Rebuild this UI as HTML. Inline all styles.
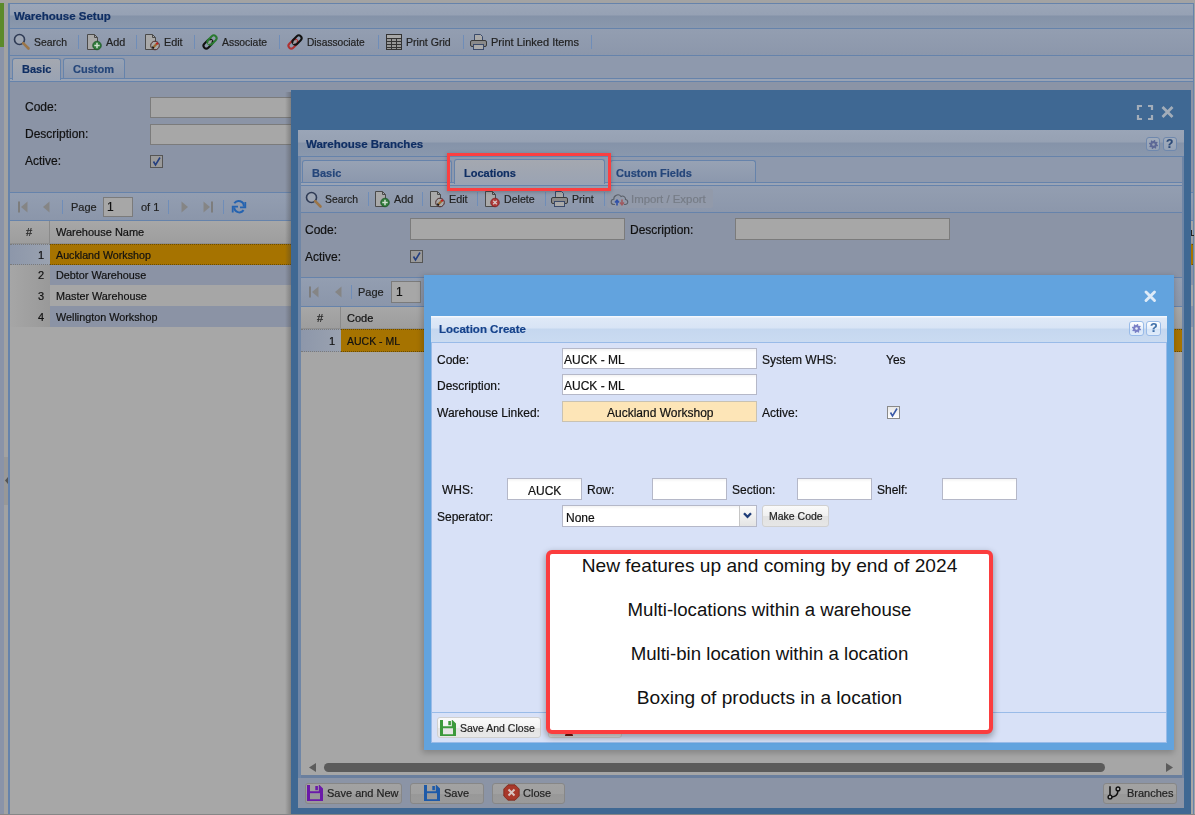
<!DOCTYPE html>
<html><head><meta charset="utf-8">
<style>
*{box-sizing:border-box;margin:0;padding:0}
html,body{width:1195px;height:815px;overflow:hidden;background:#a3a3a3;font-family:"Liberation Sans",sans-serif;font-size:11px;color:#111}
.a{position:absolute}
.t{position:absolute;white-space:nowrap;line-height:13px;will-change:transform;-webkit-text-stroke:0.2px currentColor}
.b{font-weight:bold}
.hd{color:#0f2e63;font-weight:bold}
.inp{position:absolute;background:#a7a7a7;border:1px solid #7b7b7b}
.btn{background:linear-gradient(#a2a2a2 0,#a0a0a0 50%,#989898 51%,#9a9a9a);border:1px solid #878787;border-radius:3px}
.fi{background:linear-gradient(#f3f3f3,#fff 3px);border:1px solid #b5b8c8}
.sep{position:absolute;width:1px;height:14px;background:#6f8db8}
svg{position:absolute;overflow:visible}
</style></head><body>

<!-- ============ LEFT STRIP ============ -->
<div class="a" style="left:0;top:3px;width:4px;height:44px;background:#5b8a2b"></div>
<div class="a" style="left:0;top:47px;width:4px;height:768px;background:#8a93a8"></div>
<div class="a" style="left:4px;top:3px;width:4px;height:812px;background:#a2a2a2"></div>
<div class="a" style="left:4px;top:457px;width:4px;height:48px;background:#989898"></div>
<svg style="left:4px;top:476px" width="4" height="9"><path d="M1 4.5 L4 1 L4 8 Z" fill="#555"/></svg>

<!-- ============ MAIN PANEL (Warehouse Setup) ============ -->
<div class="a" id="mp" style="left:8px;top:3px;width:1186px;height:812px;background:#a7a7a7;border:1px solid #6683ab;border-bottom:none"></div>
<!-- header -->
<div class="a" style="left:9px;top:4px;width:1184px;height:24px;background:linear-gradient(#9ba6b8 0,#96a1b4 11px,#8492a8 12px,#8a98ad 24px)"></div>
<div class="a" style="left:9px;top:28px;width:1184px;height:1px;background:#6683ab"></div>
<div class="t hd" style="left:14px;top:10px;font-size:11.5px">Warehouse Setup</div>
<!-- toolbar -->
<div class="a" style="left:9px;top:29px;width:1184px;height:26px;background:linear-gradient(#939eb1,#8c97ab)"></div>
<div class="a" style="left:9px;top:55px;width:1184px;height:1px;background:#6683ab"></div>
<div class="a" style="left:9px;top:56px;width:1184px;height:1px;background:#8f9aad"></div>

<!-- toolbar items -->
<svg style="left:13px;top:33px" width="17" height="17" viewBox="0 0 17 17"><circle cx="6.5" cy="6.5" r="5" fill="#9da5b3" stroke="#2f3b55" stroke-width="1.6"/><path d="M10.2 10.2 L15.5 15.5" stroke="#9b7548" stroke-width="2.6" stroke-linecap="round"/></svg>
<div class="t" style="left:34px;top:36px;color:#222;font-size:10.4px">Search</div>
<div class="sep" style="left:78px;top:35px"></div>
<svg style="left:86px;top:34px" width="16" height="16" viewBox="0 0 16 16"><path d="M1.5 0.5 H8.5 L11.5 3.5 V15.5 H1.5 Z" fill="#a9a9a9" stroke="#4a4a4a" stroke-width="1"/><path d="M8.5 0.5 V3.5 H11.5" fill="none" stroke="#4a4a4a"/><circle cx="11" cy="11.5" r="4.3" fill="#2f7a3a" stroke="#1d5526" stroke-width=".8"/><path d="M11 8.8 V14.2 M8.3 11.5 H13.7" stroke="#cfe0cf" stroke-width="1.5"/></svg>
<div class="t" style="left:106px;top:36px;color:#222;font-size:10.8px">Add</div>
<div class="sep" style="left:136px;top:35px"></div>
<svg style="left:144px;top:34px" width="16" height="16" viewBox="0 0 16 16"><path d="M1.5 0.5 H8.5 L11.5 3.5 V15.5 H1.5 Z" fill="#a9a9a9" stroke="#4a4a4a" stroke-width="1"/><path d="M8.5 0.5 V3.5 H11.5" fill="none" stroke="#4a4a4a"/><circle cx="11" cy="11.5" r="4.3" fill="#a9a9a9" stroke="#4a2a2a" stroke-width="1"/><path d="M8.6 14.1 L9.8 12.9" stroke="#111" stroke-width="2.2"/><path d="M9.6 13.1 L12.6 10" stroke="#9a6a30" stroke-width="2.2"/><path d="M12.4 10.2 L13.8 8.8" stroke="#c02020" stroke-width="2.2"/></svg>
<div class="t" style="left:164px;top:36px;color:#222;font-size:10.8px">Edit</div>
<div class="sep" style="left:194px;top:35px"></div>
<svg style="left:201px;top:33px" width="18" height="18" viewBox="0 0 18 18"><rect x="1.8" y="8.2" width="10.5" height="5.6" rx="2.8" transform="rotate(-45 7 11)" fill="none" stroke="#111" stroke-width="2"/><rect x="5.8" y="4.2" width="10.5" height="5.6" rx="2.8" transform="rotate(-45 11 7)" fill="none" stroke="#2a7a30" stroke-width="2"/><path d="M7.2 10.8 L10.8 7.2" stroke="#a0a0a0" stroke-width="1.6"/></svg>
<div class="t" style="left:222px;top:36px;color:#222;font-size:10.4px">Associate</div>
<div class="sep" style="left:279px;top:35px"></div>
<svg style="left:286px;top:33px" width="18" height="18" viewBox="0 0 18 18"><rect x="1.8" y="8.2" width="10.5" height="5.6" rx="2.8" transform="rotate(-45 7 11)" fill="none" stroke="#b03030" stroke-width="2"/><rect x="5.8" y="4.2" width="10.5" height="5.6" rx="2.8" transform="rotate(-45 11 7)" fill="none" stroke="#111" stroke-width="2"/><path d="M7.2 10.8 L10.8 7.2" stroke="#a0a0a0" stroke-width="1.6"/></svg>
<div class="t" style="left:307px;top:36px;color:#222;font-size:10.2px">Disassociate</div>
<div class="sep" style="left:378px;top:35px"></div>
<svg style="left:386px;top:34px" width="16" height="16" viewBox="0 0 16 16"><rect x="0.5" y="0.5" width="15" height="15" fill="#979797" stroke="#333"/><path d="M0.5 4.5 H15.5 M0.5 7.5 H15.5 M0.5 10.5 H15.5 M0.5 13.5 H15.5 M5.5 4.5 V15.5 M10.5 4.5 V15.5" stroke="#333" stroke-width="1"/><rect x="1" y="1" width="14" height="3" fill="#a8a8a8"/></svg>
<div class="t" style="left:406px;top:36px;color:#222;font-size:10.6px">Print Grid</div>
<div class="sep" style="left:463px;top:35px"></div>
<svg style="left:470px;top:34px" width="17" height="16" viewBox="0 0 17 16"><path d="M4.5 6.5 V0.5 H10.5 L12.5 2.5 V6.5" fill="#a9a9a9" stroke="#3a4a6a"/><rect x="0.5" y="6.5" width="16" height="6" rx="1.5" fill="#8a8a8a" stroke="#3a3a3a"/><rect x="3.5" y="10.5" width="10" height="5" fill="#a9a9a9" stroke="#3a4a6a"/></svg>
<div class="t" style="left:491px;top:36px;color:#222">Print Linked Items</div>
<div class="sep" style="left:591px;top:35px"></div>

<!-- tab strip -->
<div class="a" style="left:9px;top:57px;width:1184px;height:25px;background:#8e99ad"></div>
<div class="a" style="left:10px;top:78px;width:1183px;height:1px;background:#6683ab"></div>
<div class="a" style="left:10px;top:79px;width:1183px;height:2px;background:#9aa4b5"></div>
<div class="a" style="left:10px;top:81px;width:1183px;height:1px;background:#6683ab"></div>
<div class="a" style="left:9px;top:57px;width:1px;height:25px;background:#6683ab"></div>
<div class="a" style="left:12px;top:58px;width:49px;height:22px;border:1px solid #6683ab;border-bottom:none;border-radius:3px 3px 0 0;background:linear-gradient(#a4a8b0,#9aa3b3)"></div>
<div class="t hd" style="left:22px;top:63px">Basic</div>
<div class="a" style="left:63px;top:58px;width:62px;height:20px;border:1px solid #6683ab;border-bottom:none;border-radius:3px 3px 0 0;background:linear-gradient(#97a2b4,#8c98ad)"></div>
<div class="t hd" style="left:73px;top:63px;color:#25467a">Custom</div>

<!-- form -->
<div class="a" style="left:9px;top:82px;width:1184px;height:110px;background:#8b94a6"></div>
<div class="t" style="left:25px;top:101px;font-size:12px">Code:</div>
<div class="inp" style="left:150px;top:97px;width:160px;height:21px"></div>
<div class="t" style="left:25px;top:128px;font-size:12px">Description:</div>
<div class="inp" style="left:150px;top:124px;width:160px;height:21px"></div>
<div class="t" style="left:25px;top:155px;font-size:12px">Active:</div>
<div class="a" style="left:150px;top:155px;width:13px;height:13px;border:1px solid #555;background:#9a9a9a"></div>
<svg style="left:151px;top:156px" width="11" height="11" viewBox="0 0 11 11"><path d="M2.5 5.5 L4.5 9 L9 1.5" fill="none" stroke="#243f80" stroke-width="1.6"/></svg>
<div class="a" style="left:9px;top:192px;width:1184px;height:1px;background:#6683ab"></div>

<!-- paging toolbar -->
<div class="a" style="left:9px;top:193px;width:1184px;height:27px;background:linear-gradient(#939eb1,#8b96aa)"></div>
<div class="a" style="left:9px;top:220px;width:1184px;height:1px;background:#6683ab"></div>
<svg style="left:18px;top:201px" width="10" height="12" viewBox="0 0 10 12"><rect x="0" y="0.5" width="2" height="11" fill="#7d7d7d"/><path d="M9.5 0.5 L3 6 L9.5 11.5 Z" fill="#858585"/></svg>
<svg style="left:43px;top:201px" width="7" height="12" viewBox="0 0 7 12"><path d="M6.5 0.5 L0 6 L6.5 11.5 Z" fill="#858585"/></svg>
<div class="sep" style="left:62px;top:200px"></div>
<div class="t" style="left:71px;top:201px;color:#222">Page</div>
<div class="inp" style="left:103px;top:197px;width:30px;height:20px"></div>
<div class="t" style="left:107px;top:201px;color:#111;font-size:12px">1</div>
<div class="t" style="left:141px;top:201px;color:#222">of 1</div>
<div class="sep" style="left:168px;top:200px"></div>
<svg style="left:181px;top:201px" width="7" height="12" viewBox="0 0 7 12"><path d="M0.5 0.5 L7 6 L0.5 11.5 Z" fill="#858585"/></svg>
<svg style="left:203px;top:201px" width="10" height="12" viewBox="0 0 10 12"><path d="M0.5 0.5 L7 6 L0.5 11.5 Z" fill="#858585"/><rect x="8" y="0.5" width="2" height="11" fill="#7d7d7d"/></svg>
<div class="sep" style="left:223px;top:200px"></div>
<svg style="left:231px;top:199px" width="16" height="16" viewBox="0 0 16 16"><path d="M3.3 4.3 A5.2 5.2 0 0 1 12.8 7.6" fill="none" stroke="#2563b0" stroke-width="2"/><path d="M14.3 3 V8.3 H9" fill="none" stroke="#2563b0" stroke-width="1.8"/><path d="M12.6 11.2 A5.2 5.2 0 0 1 3.2 8.4" fill="none" stroke="#2563b0" stroke-width="2"/><path d="M1.7 13.5 V7.7 H7" fill="none" stroke="#2563b0" stroke-width="1.8"/></svg>

<!-- grid header -->
<div class="a" style="left:10px;top:221px;width:1183px;height:23px;background:linear-gradient(#a7a7a7,#9d9d9d)"></div>
<div class="a" style="left:49px;top:221px;width:1px;height:23px;background:#8a8a8a"></div>
<div class="t" style="left:26px;top:226px;color:#222">#</div>
<div class="t" style="left:56px;top:226px;color:#111">Warehouse Name</div>
<div class="a" style="left:10px;top:243px;width:1183px;height:1px;background:#8f8f8f"></div>
<!-- rows -->
<div class="a" style="left:10px;top:244px;width:40px;height:21px;background:linear-gradient(90deg,#8d97aa,#9aa2b0);border-top:1px dotted #7a7a7a;border-bottom:1px dotted #7a7a7a"></div>
<div class="a" style="left:50px;top:244px;width:1143px;height:21px;background:#a67300;border-top:1px dotted #6a4a00;border-bottom:1px dotted #6a4a00"></div>
<div class="t" style="left:38px;top:249px;color:#111">1</div>
<div class="t" style="left:56px;top:249px;color:#111;font-size:10.7px">Auckland Workshop</div>
<div class="a" style="left:10px;top:265px;width:40px;height:20px;background:linear-gradient(90deg,#a6a6a6,#999)"></div>
<div class="a" style="left:50px;top:265px;width:1143px;height:20px;background:#8b93a5"></div>
<div class="t" style="left:38px;top:269px;color:#111">2</div>
<div class="t" style="left:56px;top:269px;color:#111;font-size:10.8px">Debtor Warehouse</div>
<div class="a" style="left:10px;top:285px;width:40px;height:21px;background:linear-gradient(90deg,#a6a6a6,#999)"></div>
<div class="a" style="left:50px;top:285px;width:1143px;height:21px;background:#a6a6a6"></div>
<div class="t" style="left:38px;top:290px;color:#111">3</div>
<div class="t" style="left:56px;top:290px;color:#111;font-size:10.8px">Master Warehouse</div>
<div class="a" style="left:10px;top:306px;width:40px;height:21px;background:linear-gradient(90deg,#a6a6a6,#999)"></div>
<div class="a" style="left:50px;top:306px;width:1143px;height:21px;background:#8b93a5"></div>
<div class="t" style="left:38px;top:311px;color:#111">4</div>
<div class="t" style="left:56px;top:311px;color:#111;font-size:10.8px">Wellington Workshop</div>
<div class="a" style="left:8px;top:3px;width:2px;height:812px;background:#6683ab"></div>


<!-- ============ WAREHOUSE BRANCHES WINDOW ============ -->
<div class="a" style="left:285px;top:92px;width:6px;height:722px;background:linear-gradient(90deg,rgba(60,60,60,0),rgba(60,60,60,.35))"></div>
<div class="a" style="left:291px;top:90px;width:900px;height:724px;background:#3f6893"></div>
<!-- window tools -->
<svg style="left:1137px;top:105px" width="16" height="15" viewBox="0 0 16 15"><path d="M1 5 V1 H5 M11 1 H15 V5 M15 10 V14 H11 M5 14 H1 V10" fill="none" stroke="#a3adb9" stroke-width="2.2"/></svg>
<svg style="left:1161px;top:106px" width="13" height="12" viewBox="0 0 13 12"><path d="M1.5 1 L11.5 11 M11.5 1 L1.5 11" stroke="#a3adb9" stroke-width="2.8"/></svg>
<!-- panel -->
<div class="a" style="left:298px;top:130px;width:886px;height:678px;background:#6f86a6"></div>
<div class="a" style="left:301px;top:352px;width:881px;height:423px;background:#a6a6a6"></div>
<div class="a" style="left:298px;top:130px;width:886px;height:27px;background:linear-gradient(#9aa5b7 0,#96a1b3 12px,#8593a9 13px,#8a98ad 26px)"></div>
<div class="a" style="left:298px;top:156px;width:886px;height:1px;background:#6683ab"></div>
<div class="t hd" style="left:306px;top:138px;font-size:11.5px">Warehouse Branches</div>
<div class="a" style="left:1146px;top:137px;width:14px;height:14px;border:1px solid #6f88ad;border-radius:3px;background:linear-gradient(#a2acbb,#95a2b6)"></div>
<svg style="left:1146.5px;top:137.5px" width="13" height="13" viewBox="0 0 13 13"><path d="M9.90 6.50 L11.07 7.04 L10.75 8.26 L9.47 8.16 L8.90 8.90 L9.35 10.11 L8.26 10.75 L7.42 9.77 L6.50 9.90 L5.96 11.07 L4.74 10.75 L4.84 9.47 L4.10 8.90 L2.89 9.35 L2.25 8.26 L3.23 7.42 L3.10 6.50 L1.93 5.96 L2.25 4.74 L3.53 4.84 L4.10 4.10 L3.65 2.89 L4.74 2.25 L5.58 3.23 L6.50 3.10 L7.04 1.93 L8.26 2.25 L8.16 3.53 L8.90 4.10 L10.11 3.65 L10.75 4.74 L9.77 5.58 Z" fill="#5d6896"/><circle cx="6.5" cy="6.5" r="1.3" fill="#9aa4b5"/></svg>
<div class="a" style="left:1163px;top:137px;width:14px;height:14px;border:1px solid #6f88ad;border-radius:3px;background:linear-gradient(#a2acbb,#95a2b6)"></div>
<div class="t b" style="left:1166px;top:138px;color:#2c4a78;font-size:12px">?</div>
<!-- tab strip -->
<div class="a" style="left:301px;top:157px;width:881px;height:29px;background:#8e99ad"></div>
<div class="a" style="left:301px;top:182px;width:881px;height:1px;background:#6683ab"></div>
<div class="a" style="left:301px;top:183px;width:881px;height:2px;background:#9aa4b5"></div>
<div class="a" style="left:301px;top:185px;width:881px;height:1px;background:#6683ab"></div>
<div class="a" style="left:302px;top:160px;width:150px;height:22px;border:1px solid #6683ab;border-bottom:none;border-radius:3px 3px 0 0;background:linear-gradient(#97a2b4,#8c98ad)"></div>
<div class="t hd" style="left:312px;top:167px;color:#25467a">Basic</div>
<div class="a" style="left:454px;top:159px;width:151px;height:25px;border:1px solid #6683ab;border-bottom:none;border-radius:3px 3px 0 0;background:linear-gradient(#a4a8b0,#9aa3b3)"></div>
<div class="t hd" style="left:464px;top:167px">Locations</div>
<div class="a" style="left:610px;top:160px;width:146px;height:22px;border:1px solid #6683ab;border-bottom:none;border-radius:3px 3px 0 0;background:linear-gradient(#97a2b4,#8c98ad)"></div>
<div class="t hd" style="left:616px;top:167px;color:#25467a">Custom Fields</div>
<!-- toolbar -->
<div class="a" style="left:301px;top:186px;width:881px;height:26px;background:linear-gradient(#939eb1,#8c97ab)"></div>
<div class="a" style="left:301px;top:212px;width:881px;height:1px;background:#6683ab"></div>
<svg style="left:305px;top:191px" width="17" height="17" viewBox="0 0 17 17"><circle cx="6.5" cy="6.5" r="5" fill="#9da5b3" stroke="#2f3b55" stroke-width="1.6"/><path d="M10.2 10.2 L15.5 15.5" stroke="#9b7548" stroke-width="2.6" stroke-linecap="round"/></svg>
<div class="t" style="left:325px;top:193px;color:#222;font-size:10.4px">Search</div>
<div class="sep" style="left:368px;top:192px"></div>
<svg style="left:374px;top:191px" width="16" height="16" viewBox="0 0 16 16"><path d="M1.5 0.5 H8.5 L11.5 3.5 V15.5 H1.5 Z" fill="#a9a9a9" stroke="#4a4a4a" stroke-width="1"/><path d="M8.5 0.5 V3.5 H11.5" fill="none" stroke="#4a4a4a"/><circle cx="11" cy="11.5" r="4.3" fill="#2f7a3a" stroke="#1d5526" stroke-width=".8"/><path d="M11 8.8 V14.2 M8.3 11.5 H13.7" stroke="#cfe0cf" stroke-width="1.5"/></svg>
<div class="t" style="left:394px;top:193px;color:#222;font-size:10.8px">Add</div>
<div class="sep" style="left:422px;top:192px"></div>
<svg style="left:429px;top:191px" width="16" height="16" viewBox="0 0 16 16"><path d="M1.5 0.5 H8.5 L11.5 3.5 V15.5 H1.5 Z" fill="#a9a9a9" stroke="#4a4a4a" stroke-width="1"/><path d="M8.5 0.5 V3.5 H11.5" fill="none" stroke="#4a4a4a"/><circle cx="11" cy="11.5" r="4.3" fill="#a9a9a9" stroke="#4a2a2a" stroke-width="1"/><path d="M8.6 14.1 L9.8 12.9" stroke="#111" stroke-width="2.2"/><path d="M9.6 13.1 L12.6 10" stroke="#9a6a30" stroke-width="2.2"/><path d="M12.4 10.2 L13.8 8.8" stroke="#c02020" stroke-width="2.2"/></svg>
<div class="t" style="left:449px;top:193px;color:#222;font-size:10.8px">Edit</div>
<div class="sep" style="left:477px;top:192px"></div>
<svg style="left:484px;top:191px" width="16" height="16" viewBox="0 0 16 16"><path d="M1.5 0.5 H8.5 L11.5 3.5 V15.5 H1.5 Z" fill="#a9a9a9" stroke="#4a4a4a" stroke-width="1"/><path d="M8.5 0.5 V3.5 H11.5" fill="none" stroke="#4a4a4a"/><circle cx="11" cy="11.5" r="4.3" fill="#b03a3a" stroke="#7a2020" stroke-width=".8"/><path d="M9.2 9.7 L12.8 13.3 M12.8 9.7 L9.2 13.3" stroke="#d8c8c8" stroke-width="1.3"/></svg>
<div class="t" style="left:504px;top:193px;color:#222;font-size:10.6px">Delete</div>
<div class="sep" style="left:545px;top:192px"></div>
<svg style="left:551px;top:191px" width="17" height="16" viewBox="0 0 17 16"><path d="M4.5 6.5 V0.5 H10.5 L12.5 2.5 V6.5" fill="#a9a9a9" stroke="#3a4a6a"/><rect x="0.5" y="6.5" width="16" height="6" rx="1.5" fill="#8a8a8a" stroke="#3a3a3a"/><rect x="3.5" y="10.5" width="10" height="5" fill="#a9a9a9" stroke="#3a4a6a"/></svg>
<div class="t" style="left:572px;top:193px;color:#222;font-size:10.6px">Print</div>
<div class="sep" style="left:604px;top:192px"></div>
<div class="a" style="left:607px;top:189px;width:106px;height:19px;background:#929aaa;border-radius:2px"></div>
<svg style="left:611px;top:193px" width="17" height="13" viewBox="0 0 17 13"><path d="M4 11.5 H2.8 A2.6 2.6 0 0 1 2.8 6.3 A4 4 0 0 1 10 3.5 A3 3 0 0 1 14.5 6.5 A2.5 2.5 0 0 1 14 11.5 H13" fill="none" stroke="#5a5f68" stroke-width="1.1"/><path d="M6 12.5 V7.5 M4 9.5 L6 7.2 L8 9.5" fill="none" stroke="#3050a8" stroke-width="1.6"/><path d="M11 6.5 V11.5 M9 9.5 L11 11.8 L13 9.5" fill="none" stroke="#a05a60" stroke-width="1.6"/></svg>
<div class="t" style="left:631px;top:193px;color:#767c86;font-size:11.4px">Import / Export</div>
<!-- form -->
<div class="a" style="left:301px;top:213px;width:881px;height:65px;background:#8b94a6"></div>
<div class="t" style="left:305px;top:224px;font-size:12px">Code:</div>
<div class="inp" style="left:410px;top:218px;width:215px;height:22px"></div>
<div class="t" style="left:630px;top:224px;font-size:12px">Description:</div>
<div class="inp" style="left:735px;top:218px;width:215px;height:22px"></div>
<div class="t" style="left:305px;top:251px;font-size:12px">Active:</div>
<div class="a" style="left:410px;top:250px;width:13px;height:13px;border:1px solid #555;background:#9a9a9a"></div>
<svg style="left:411px;top:251px" width="11" height="11" viewBox="0 0 11 11"><path d="M2.5 5.5 L4.5 9 L9 1.5" fill="none" stroke="#243f80" stroke-width="1.6"/></svg>
<div class="a" style="left:301px;top:277px;width:881px;height:1px;background:#6683ab"></div>
<!-- paging -->
<div class="a" style="left:301px;top:278px;width:881px;height:28px;background:linear-gradient(#939eb1,#8b96aa)"></div>
<div class="a" style="left:301px;top:306px;width:881px;height:1px;background:#6683ab"></div>
<svg style="left:309px;top:286px" width="10" height="12" viewBox="0 0 10 12"><rect x="0" y="0.5" width="2" height="11" fill="#7d7d7d"/><path d="M9.5 0.5 L3 6 L9.5 11.5 Z" fill="#858585"/></svg>
<svg style="left:335px;top:286px" width="7" height="12" viewBox="0 0 7 12"><path d="M6.5 0.5 L0 6 L6.5 11.5 Z" fill="#858585"/></svg>
<div class="sep" style="left:351px;top:285px"></div>
<div class="t" style="left:358px;top:286px;color:#222">Page</div>
<div class="inp" style="left:391px;top:281px;width:30px;height:22px"></div>
<div class="t" style="left:396px;top:286px;color:#111;font-size:12px">1</div>
<!-- grid header -->
<div class="a" style="left:301px;top:307px;width:881px;height:22px;background:linear-gradient(#a7a7a7,#9d9d9d)"></div>
<div class="a" style="left:340px;top:307px;width:1px;height:22px;background:#8a8a8a"></div>
<div class="t" style="left:317px;top:312px;color:#222">#</div>
<div class="t" style="left:347px;top:312px;color:#111">Code</div>
<div class="a" style="left:301px;top:328px;width:881px;height:1px;background:#8f8f8f"></div>
<div class="a" style="left:301px;top:329px;width:40px;height:23px;background:linear-gradient(90deg,#8d97aa,#9aa2b0);border-top:1px dotted #7a7a7a;border-bottom:1px dotted #7a7a7a"></div>
<div class="a" style="left:341px;top:329px;width:841px;height:23px;background:#a67300;border-top:1px dotted #6a4a00;border-bottom:1px dotted #6a4a00"></div>
<div class="t" style="left:329px;top:335px;color:#111">1</div>
<div class="t" style="left:347px;top:335px;color:#111;font-size:10.5px">AUCK - ML</div>
<!-- scrollbar -->
<svg style="left:309px;top:763px" width="8" height="9" viewBox="0 0 8 9"><path d="M7 0 L0 4.5 L7 9 Z" fill="#5c5c5c"/></svg>
<div class="a" style="left:324px;top:763px;width:781px;height:9px;border-radius:4.5px;background:#5b5b5b"></div>
<svg style="left:1166px;top:763px" width="8" height="9" viewBox="0 0 8 9"><path d="M0 0 L7 4.5 L0 9 Z" fill="#5c5c5c"/></svg>
<!-- bottom toolbar -->
<div class="a" style="left:301px;top:775px;width:881px;height:3px;background:#6a7f9e"></div>
<div class="a" style="left:298px;top:778px;width:886px;height:30px;background:#8b94a6"></div>
<div class="a btn" style="left:305px;top:783px;width:97px;height:21px"></div>
<svg style="left:307px;top:785px" width="16" height="16" viewBox="0 0 16 16"><path fill-rule="evenodd" d="M0 0 H12.5 L16 3.5 V16 H0 Z M3 0 V6.2 H11.8 V0 Z M3 8.3 V14.3 H13 V8.3 Z" fill="#6a1aa8"/><rect x="8.3" y="1" width="2.6" height="4.2" fill="#6a1aa8"/></svg>
<div class="t" style="left:327px;top:787px;color:#222">Save and New</div>
<div class="a btn" style="left:410px;top:783px;width:74px;height:21px"></div>
<svg style="left:424px;top:785px" width="16" height="16" viewBox="0 0 16 16"><path fill-rule="evenodd" d="M0 0 H12.5 L16 3.5 V16 H0 Z M3 0 V6.2 H11.8 V0 Z M3 8.3 V14.3 H13 V8.3 Z" fill="#1e5aa8"/><rect x="8.3" y="1" width="2.6" height="4.2" fill="#1e5aa8"/></svg>
<div class="t" style="left:444px;top:787px;color:#222">Save</div>
<div class="a btn" style="left:492px;top:783px;width:73px;height:21px"></div>
<svg style="left:503px;top:784px" width="17" height="17" viewBox="0 0 17 17"><path d="M5 0.8 H12 L16.2 5 V12 L12 16.2 H5 L0.8 12 V5 Z" fill="#a8382a" stroke="#7a2518" stroke-width=".8"/><path d="M5.5 5.5 L11.5 11.5 M11.5 5.5 L5.5 11.5" stroke="#d8c4c0" stroke-width="2"/></svg>
<div class="t" style="left:523px;top:787px;color:#222">Close</div>
<div class="a btn" style="left:1103px;top:783px;width:74px;height:21px"></div>
<svg style="left:1106px;top:785px" width="16" height="16" viewBox="0 0 16 16"><path d="M4 1.2 V10" stroke="#111" stroke-width="1.5"/><path d="M5.8 12 Q11.6 11.6 12 5.8" fill="none" stroke="#111" stroke-width="1.5"/><circle cx="4" cy="12" r="1.9" fill="#aaa" stroke="#111" stroke-width="1.4"/><circle cx="12" cy="3.9" r="1.9" fill="#aaa" stroke="#111" stroke-width="1.4"/></svg>
<div class="t" style="left:1127px;top:787px;color:#222">Branches</div>


<div class="a" style="left:0;top:814px;width:1195px;height:1px;background:#868686"></div>
<div class="a" style="left:1191px;top:230px;width:1px;height:6px;background:#222"></div><div class="a" style="left:1191px;top:235px;width:3px;height:1px;background:#222"></div>
<!-- ============ LOCATION CREATE WINDOW ============ -->
<div class="a" style="left:424px;top:275px;width:750px;height:475px;background:#62a3de;box-shadow:-1px 2px 6px 1px rgba(0,0,0,.2)"></div>
<svg style="left:1144px;top:290px" width="13" height="13" viewBox="0 0 13 13"><path d="M2 2 L10.5 10.5 M10.5 2 L2 10.5" stroke="#deebf8" stroke-width="2.9" stroke-linecap="round"/></svg>
<div class="a" style="left:431px;top:316px;width:736px;height:427px;background:#d8e1f7;border:1px solid #99bbe8;border-top:none"></div>
<div class="a" style="left:431px;top:316px;width:736px;height:27px;background:linear-gradient(#f3f7fd 0,#f3f7fd 1px,#dfe9f7 2px,#d8e4f5 12px,#c5d7ef 13px,#cadbf1 26px);border-bottom:1px solid #99bbe8"></div>
<div class="t hd" style="left:439px;top:323px;color:#15428b;font-size:11.5px">Location Create</div>
<div class="a" style="left:1129px;top:321px;width:15px;height:15px;border:1px solid #99bbe8;border-radius:3px;background:linear-gradient(#fff,#e6effb 50%,#d4e4f8 51%,#e1ecfa)"></div>
<svg style="left:1130px;top:322px" width="13" height="13" viewBox="0 0 13 13"><path d="M9.90 6.50 L11.07 7.04 L10.75 8.26 L9.47 8.16 L8.90 8.90 L9.35 10.11 L8.26 10.75 L7.42 9.77 L6.50 9.90 L5.96 11.07 L4.74 10.75 L4.84 9.47 L4.10 8.90 L2.89 9.35 L2.25 8.26 L3.23 7.42 L3.10 6.50 L1.93 5.96 L2.25 4.74 L3.53 4.84 L4.10 4.10 L3.65 2.89 L4.74 2.25 L5.58 3.23 L6.50 3.10 L7.04 1.93 L8.26 2.25 L8.16 3.53 L8.90 4.10 L10.11 3.65 L10.75 4.74 L9.77 5.58 Z" fill="#7a80c6"/><circle cx="6.5" cy="6.5" r="1.3" fill="#e8eefa"/></svg>
<div class="a" style="left:1146px;top:321px;width:15px;height:15px;border:1px solid #99bbe8;border-radius:3px;background:linear-gradient(#fff,#e6effb 50%,#d4e4f8 51%,#e1ecfa)"></div>
<div class="t b" style="left:1150px;top:322px;color:#3f6fa8;font-size:12.5px">?</div>
<!-- fields -->
<div class="t" style="left:437px;top:354px;font-size:12px">Code:</div>
<div class="a fi" style="left:562px;top:348px;width:195px;height:21px"></div>
<div class="t" style="left:564px;top:354px;font-size:12px">AUCK - ML</div>
<div class="t" style="left:762px;top:354px;font-size:12px">System WHS:</div>
<div class="t" style="left:886px;top:354px;font-size:12px">Yes</div>
<div class="t" style="left:437px;top:380px;font-size:12px">Description:</div>
<div class="a fi" style="left:562px;top:374px;width:195px;height:21px"></div>
<div class="t" style="left:564px;top:380px;font-size:12px">AUCK - ML</div>
<div class="t" style="left:437px;top:407px;font-size:12px">Warehouse Linked:</div>
<div class="a" style="left:562px;top:401px;width:195px;height:21px;background:#fde5b7;border:1px solid #c9c2b2"></div>
<div class="t" style="left:607px;top:407px;font-size:12px">Auckland Workshop</div>
<div class="t" style="left:762px;top:407px;font-size:12px">Active:</div>
<div class="a" style="left:887px;top:406px;width:13px;height:13px;border:1px solid #8a8a8a;background:linear-gradient(#e8e8e8,#fff)"></div>
<svg style="left:888px;top:407px" width="11" height="11" viewBox="0 0 11 11"><path d="M2.5 5.5 L4.5 9 L9 1.5" fill="none" stroke="#3a5aa8" stroke-width="1.6"/></svg>
<div class="t" style="left:442px;top:484px;font-size:12px">WHS:</div>
<div class="a fi" style="left:507px;top:478px;width:75px;height:22px"></div>
<div class="t" style="left:528px;top:485px;font-size:12px">AUCK</div>
<div class="t" style="left:587px;top:484px;font-size:12px">Row:</div>
<div class="a fi" style="left:652px;top:478px;width:75px;height:22px"></div>
<div class="t" style="left:732px;top:484px;font-size:12px">Section:</div>
<div class="a fi" style="left:797px;top:478px;width:75px;height:22px"></div>
<div class="t" style="left:877px;top:484px;font-size:12px">Shelf:</div>
<div class="a fi" style="left:942px;top:478px;width:75px;height:22px"></div>
<div class="t" style="left:437px;top:511px;font-size:12px">Seperator:</div>
<div class="a fi" style="left:562px;top:505px;width:195px;height:22px"></div>
<div class="t" style="left:566px;top:512px;font-size:12px">None</div>
<div class="a" style="left:739px;top:506px;width:17px;height:20px;background:linear-gradient(#fbfbfb,#e4e4e4);border-left:1px solid #c6c6c6"></div>
<svg style="left:743px;top:512px" width="9" height="7" viewBox="0 0 9 7"><path d="M1 1.2 L4.5 4.8 L8 1.2" fill="none" stroke="#1e3c78" stroke-width="2.3"/></svg>
<div class="a" style="left:762px;top:505px;width:67px;height:22px;border:1px solid #d0d0d0;border-radius:3px;background:linear-gradient(#fafafa 0,#f0f0f0 50%,#e2e2e2 51%,#e6e6e6)"></div>
<div class="t" style="left:769px;top:510px;font-size:10.5px;color:#222">Make Code</div>
<!-- toolbar -->
<div class="a" style="left:432px;top:712px;width:734px;height:1px;background:#99bbe8"></div>
<div class="a" style="left:437px;top:717px;width:104px;height:21px;border:1px solid #d0d0d0;border-radius:3px;background:linear-gradient(#fafafa 0,#f2f2f2 50%,#e4e4e4 51%,#e8e8e8)"></div>
<svg style="left:440px;top:720px" width="16" height="16" viewBox="0 0 16 16"><path fill-rule="evenodd" d="M0 0 H12.5 L16 3.5 V16 H0 Z M3 0 V6.2 H11.8 V0 Z M3 8.3 V14.3 H13 V8.3 Z" fill="#3c9a3c"/><rect x="8.3" y="1" width="2.6" height="4.2" fill="#3c9a3c"/></svg>
<div class="t" style="left:460px;top:722px;color:#222;font-size:10.5px">Save And Close</div>
<div class="a" style="left:548px;top:717px;width:74px;height:21px;border:1px solid #d0d0d0;border-radius:3px;background:linear-gradient(#fafafa 0,#f2f2f2 50%,#e4e4e4 51%,#e8e8e8)"></div>
<div class="a" style="left:565px;top:733px;width:8px;height:3px;border-radius:4px 4px 0 0;background:#7a1a10"></div>

<!-- ============ ANNOTATIONS ============ -->
<div class="a" style="left:447px;top:153px;width:164px;height:38px;border:3px solid #fb3f40;box-shadow:0 1px 4px rgba(0,0,0,.25)"></div>
<div class="a" style="left:546px;top:550px;width:447px;height:184px;border:4px solid #fb3d3e;border-radius:6px;background:#fff;box-shadow:0 3px 6px 1px rgba(0,0,0,.3)"></div>
<div class="a" style="left:546px;top:544px;width:447px;text-align:center;font-size:19.15px;line-height:44px;color:#111;white-space:nowrap">New features up and coming by end of 2024</div>
<div class="a" style="left:546px;top:588px;width:447px;text-align:center;font-size:18.65px;line-height:44px;color:#111;white-space:nowrap">Multi-locations within a warehouse</div>
<div class="a" style="left:546px;top:632px;width:447px;text-align:center;font-size:18.65px;line-height:44px;color:#111;white-space:nowrap">Multi-bin location within a location</div>
<div class="a" style="left:546px;top:676px;width:447px;text-align:center;font-size:19.1px;line-height:44px;color:#111;white-space:nowrap">Boxing of products in a location</div>

</body></html>
